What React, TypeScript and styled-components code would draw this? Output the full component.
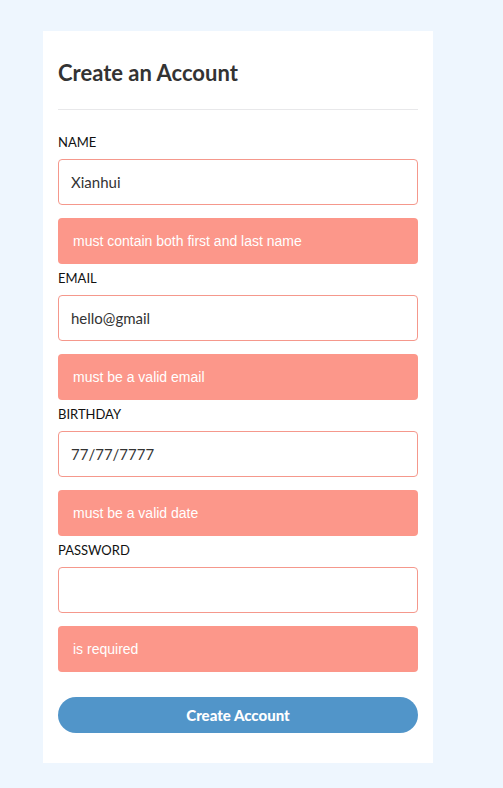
import React from "react";
import styled, { createGlobalStyle } from "styled-components";

const Global = createGlobalStyle`
  html, body { margin: 0; padding: 0; }
  body {
    background: #eef6fe;
    font-family: Lato, "Liberation Sans", sans-serif;
    min-height: 788px;
  }
  * { box-sizing: border-box; }
`;

const Page = styled.div`
  padding: 31px 0 25px 43px;
`;

const Card = styled.form`
  width: 390px;
  background: #ffffff;
  padding: 29px 15px 30px;
  display: flex;
  flex-direction: column;
`;

const Title = styled.h1`
  margin: 0;
  font-family: Lato, sans-serif;
  font-weight: 700;
  font-size: 22px;
  line-height: 26px;
  color: #333333;
`;

const Divider = styled.hr`
  margin: 23px 0 24px;
  border: 0;
  border-top: 1px solid #e8e8ea;
  height: 0;
`;

const Field = styled.div`
  display: flex;
  flex-direction: column;
  margin-bottom: 6px;
`;

const Label = styled.label`
  font-family: Lato, sans-serif;
  font-size: 13px;
  line-height: 16px;
  color: #111111;
  text-transform: uppercase;
  margin-bottom: 9px;
`;

const Input = styled.input<{ $invalid?: boolean }>`
  height: 46px;
  border: 1px solid ${(p) => (p.$invalid ? "#f5988c" : "#cccccc")};
  border-radius: 4px;
  padding: 0 12px;
  font-family: Lato, sans-serif;
  font-size: 15px;
  color: #333333;
  background: #fff;
  outline: none;
  margin-bottom: 13px;
`;

const ErrorBox = styled.div`
  height: 46px;
  background: #fc978a;
  border-radius: 4px;
  padding: 0 15px;
  display: flex;
  align-items: center;
  font-family: "Liberation Sans", Arial, sans-serif;
  font-size: 14px;
  color: #ffffff;
`;

const Button = styled.button`
  margin-top: 19px;
  height: 36px;
  border: 0;
  border-radius: 18px;
  background: #5195c9;
  color: #ffffff;
  font-family: Lato, sans-serif;
  font-weight: 900;
  font-size: 15px;
  cursor: pointer;
`;

const fields = [
  { label: "Name", value: "Xianhui", error: "must contain both first and last name", type: "text" },
  { label: "Email", value: "hello@gmail", error: "must be a valid email", type: "text" },
  { label: "Birthday", value: "77/77/7777", error: "must be a valid date", type: "text" },
  { label: "Password", value: "", error: "is required", type: "password" },
];

export default function App() {
  return (
    <Page>
      <Global />
      <Card onSubmit={(e) => e.preventDefault()}>
        <Title>Create an Account</Title>
        <Divider />
        {fields.map((f) => (
          <Field key={f.label}>
            <Label>{f.label}</Label>
            <Input $invalid type={f.type} defaultValue={f.value} />
            <ErrorBox>{f.error}</ErrorBox>
          </Field>
        ))}
        <Button type="submit">Create Account</Button>
      </Card>
    </Page>
  );
}
